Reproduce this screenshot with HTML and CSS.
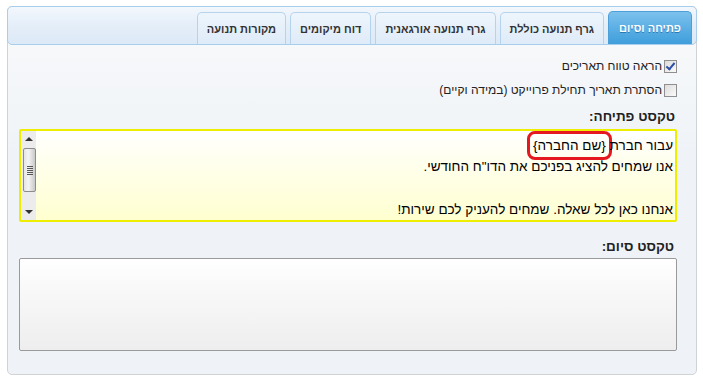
FILE: index.html
```html
<!DOCTYPE html>
<html lang="he" dir="rtl">
<head>
    <meta charset="UTF-8">
    <title>פתיחה וסיום</title>
    <link rel="stylesheet" href="styles.css">
</head>
<body>
    <div class="tabs">
        <ul class="tab-nav">
            <li class="tab active">פתיחה וסיום</li>
            <li class="tab">גרף תנועה כוללת</li>
            <li class="tab">גרף תנועה אורגאנית</li>
            <li class="tab">דוח מיקומים</li>
            <li class="tab">מקורות תנועה</li>
        </ul>
        <div class="tab-panel">
            <label class="check-row">
                <span class="checkbox checked"></span> הראה טווח תאריכים
            </label>
            <label class="check-row">
                <span class="checkbox"></span> הסתרת תאריך תחילת פרוייקט (במידה וקיים)
            </label>

            <div class="field-label">טקסט פתיחה:</div>
            <div class="text-box highlight">
                <div class="scrollbar">
                    <span class="arrow up"></span>
                    <span class="thumb"><span class="grip"></span></span>
                    <span class="arrow down"></span>
                </div>
                <div class="text-content">
                    <div>עבור חברת <span class="mark">{שם החברה}</span></div>
                    <div>אנו שמחים להציג בפניכם את הדו"ח החודשי.</div>
                    <div>&nbsp;</div>
                    <div>אנחנו כאן לכל שאלה. שמחים להעניק לכם שירות!</div>
                </div>
            </div>

            <div class="field-label closing">טקסט סיום:</div>
            <div class="text-box plain"></div>
        </div>
    </div>
</body>
</html>
```

FILE: styles.css
```css
body {
    margin: 0;
    padding: 6px;
    background-color: #ffffff;
    font-family: "Liberation Sans", "DejaVu Sans", Arial, sans-serif;
    color: #222;
}
.tabs {
    width: 688px;
    height: 367px;
    border: 1px solid #cfd3d6;
    border-radius: 5px;
    background: linear-gradient(#f9fafb, #eff3f7 40%);
}
.tab-nav {
    list-style: none;
    margin: -1px -1px 0 -1px;
    padding: 4px 4px 0 0;
    height: 33px;
    display: flex;
    gap: 4px;
    border: 1px solid #a9cdec;
    border-radius: 5px;
    background: linear-gradient(#f2f7fc, #e4eef9 50%, #dce9f6);
}
.tab {
    height: 32px;
    padding: 0 9px;
    box-sizing: border-box;
    display: flex;
    align-items: center;
    font-size: 11px;
    font-weight: bold;
    color: #333;
    border: 1px solid #b6d3ee;
    border-bottom: none;
    border-radius: 5px 5px 0 0;
    background: linear-gradient(#eef5fc, #deebf8);
    margin-top: 1px;
}
.tab.active {
    color: #ffffff;
    height: 33px;
    margin-top: 0;
    padding: 0 10px;
    border-color: #4d9fd9;
    background: linear-gradient(#7cc1ec, #5cafe5 50%, #3f9edb);
    text-shadow: 0 1px 0 #2a7ab5;
}
.tab-panel {
    padding: 13px 19px 0 11px;
}
.check-row {
    display: flex;
    align-items: center;
    gap: 2px;
    font-size: 12px;
    height: 14px;
    margin-bottom: 10px;
}
.check-row:first-child {
    margin-top: 1px;
}
.checkbox {
    width: 11px;
    height: 11px;
    border: 1px solid #8f8f8f;
    background: linear-gradient(135deg, #dcdcdc, #fafafa);
    position: relative;
}
.checkbox.checked::after {
    content: "";
    position: absolute;
    left: 3px;
    top: 0;
    width: 3px;
    height: 7px;
    border: solid #2c4fa8;
    border-width: 0 2px 2px 0;
    transform: rotate(40deg);
}
.field-label {
    font-size: 13.5px;
    font-weight: bold;
    margin: 12px 2px 5px 0;
}
.field-label.closing {
    margin-top: 17px;
    margin-right: 3px;
    margin-bottom: 4px;
}
.text-box {
    height: 89px;
    border-radius: 2px;
}
.highlight {
    border: 2px solid #eeee00;
    background: linear-gradient(#ffffff, #fffff0 30%, #ffffd0);
    display: flex;
}
.plain {
    height: 91px;
    border: 1px solid #9a9a9a;
    background: linear-gradient(#ffffff, #f9f9f9 30%, #eeeeee);
}
.text-content {
    flex: 1;
    font-size: 13.5px;
    line-height: 21.3px;
    color: #000;
    padding: 4px 2px 0 0;
}
.mark {
    border: 3px solid #e5171f;
    border-radius: 8px;
    padding: 4px 3px;
    margin: -3px -6px;
}
.scrollbar {
    order: 2;
    width: 15px;
    display: flex;
    flex-direction: column;
    background: #ececec;
}
.arrow {
    height: 16px;
    position: relative;
}
.arrow.up::after,
.arrow.down::after {
    content: "";
    position: absolute;
    left: 4px;
    border-left: 4px solid transparent;
    border-right: 4px solid transparent;
}
.arrow.up::after {
    top: 6px;
    border-bottom: 4px solid #333;
}
.arrow.down::after {
    bottom: 6px;
    border-top: 4px solid #333;
}
.thumb {
    height: 44px;
    margin: 1px 0 0 1px;
    width: 13px;
    border: 1px solid #8c8c8c;
    border-radius: 2px;
    background: linear-gradient(90deg, #e5e5e5, #f4f4f4 40%, #c9c9c9);
    position: relative;
    box-sizing: border-box;
}
.grip {
    position: absolute;
    left: 3px;
    top: 17px;
    width: 6px;
    height: 9px;
    background: repeating-linear-gradient(#555 0 1px, transparent 1px 2px);
}
.arrow.down {
    margin-top: auto;
}
```
